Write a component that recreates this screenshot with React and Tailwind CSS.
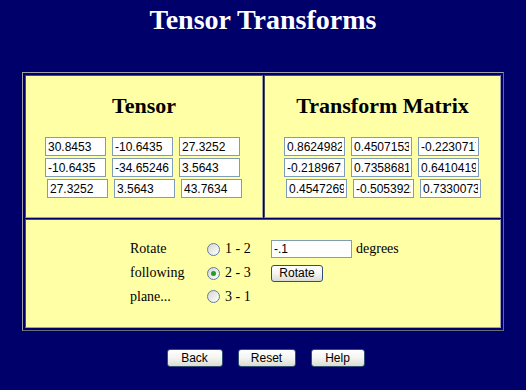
import React from 'react';

const tensor = [
  ['30.8453', '-10.6435', '27.3252'],
  ['-10.6435', '-34.65246', '3.5643'],
  ['27.3252', '3.5643', '43.7634'],
];

const matrix = [
  ['0.8624982', '0.4507153', '-0.2230717'],
  ['-0.2189671', '0.7358681', '0.6410419'],
  ['0.4547269', '-0.5053922', '0.7330073'],
];

// Old-school XP style text box
const Box = ({ value, width = 'w-[61px] h-[19px]' }) => (
  <input
    type="text"
    defaultValue={value}
    className={`${width} border border-[#7f9db9] bg-white px-[2px] py-0 text-[12px] text-black font-['Liberation_Sans','Arial',sans-serif] outline-none`}
  />
);

const Grid = ({ rows }) => (
  <div className="flex flex-col gap-[2px] mt-[18px]">
    {rows.map((row, i) => (
      <div key={i} className={i === 2 ? 'flex gap-[6px] pl-[2px]' : 'flex gap-[6px]'}>
        {row.map((v, j) => (
          <Box key={j} value={v} />
        ))}
      </div>
    ))}
  </div>
);

const Radio = ({ checked }) => (
  <span className="w-[13px] h-[13px] rounded-full border border-[#5f7d9c] bg-gradient-to-br from-[#d6d6d0] to-[#ffffff] flex items-center justify-center shrink-0">
    {checked && <span className="w-[5px] h-[5px] rounded-full bg-[#21a121]" />}
  </span>
);

const XpButton = ({ label, width }) => (
  <button
    type="button"
    className={`${width} rounded-[3px] border border-[#2f4f77] bg-gradient-to-b from-[#ffffff] via-[#f4f4f0] to-[#dcdcd4] text-[12px] leading-none text-black font-['Liberation_Sans','Arial',sans-serif]`}
  >
    {label}
  </button>
);

const cell = 'bg-[#ffffa6] border border-t-[#4a4a5a] border-l-[#4a4a5a] border-r-[#a0a0a8] border-b-[#a0a0a8]';

export default function App() {
  return (
    <div className="w-[526px] h-[390px] bg-[#00006b] font-['Liberation_Serif','Times_New_Roman',serif] text-black overflow-hidden">
      <h1 className="pt-[3px] text-center text-[28px] leading-[34px] font-bold text-white">
        Tensor Transforms
      </h1>

      {/* main table */}
      <div className="mx-[22px] mt-[35px] border border-t-[#a0a0a8] border-l-[#a0a0a8] border-r-[#6a6a78] border-b-[#6a6a78] p-[2px] grid grid-cols-[238px_1fr] gap-[1px]">
        <div className={`${cell} h-[143px] pt-[17px] pl-[19px]`}>
          <h2 className="text-[22px] leading-[26px] font-bold text-center pr-[19px]">Tensor</h2>
          <Grid rows={tensor} />
        </div>
        <div className={`${cell} h-[143px] pt-[17px] pl-[19px]`}>
          <h2 className="text-[22px] leading-[26px] font-bold text-center pr-[19px]">Transform Matrix</h2>
          <Grid rows={matrix} />
        </div>

        <div className={`${cell} col-span-2 h-[109px] pt-[17px] pl-[104px] text-[14px] leading-[16px]`}>
          <div className="grid grid-cols-[77px_64px_auto] grid-rows-[24px_24px_23px] items-center">
            <span>Rotate</span>
            <span className="flex items-center gap-[5px]"><Radio />1 - 2</span>
            <span className="flex items-center gap-[4px]">
              <Box value="-.1" width="w-[81px] h-[18px]" />
              degrees
            </span>

            <span>following</span>
            <span className="flex items-center gap-[5px]"><Radio checked />2 - 3</span>
            <span className="flex items-center">
              <XpButton label="Rotate" width="w-[52px] h-[17px]" />
            </span>

            <span>plane...</span>
            <span className="flex items-center gap-[5px]"><Radio />3 - 1</span>
            <span />
          </div>
        </div>
      </div>

      {/* bottom buttons */}
      <div className="mt-[18px] pl-[5px] flex justify-center gap-[15px]">
        <XpButton label="Back" width="w-[56px] h-[18px]" />
        <XpButton label="Reset" width="w-[58px] h-[18px]" />
        <XpButton label="Help" width="w-[54px] h-[18px]" />
      </div>
    </div>
  );
}
